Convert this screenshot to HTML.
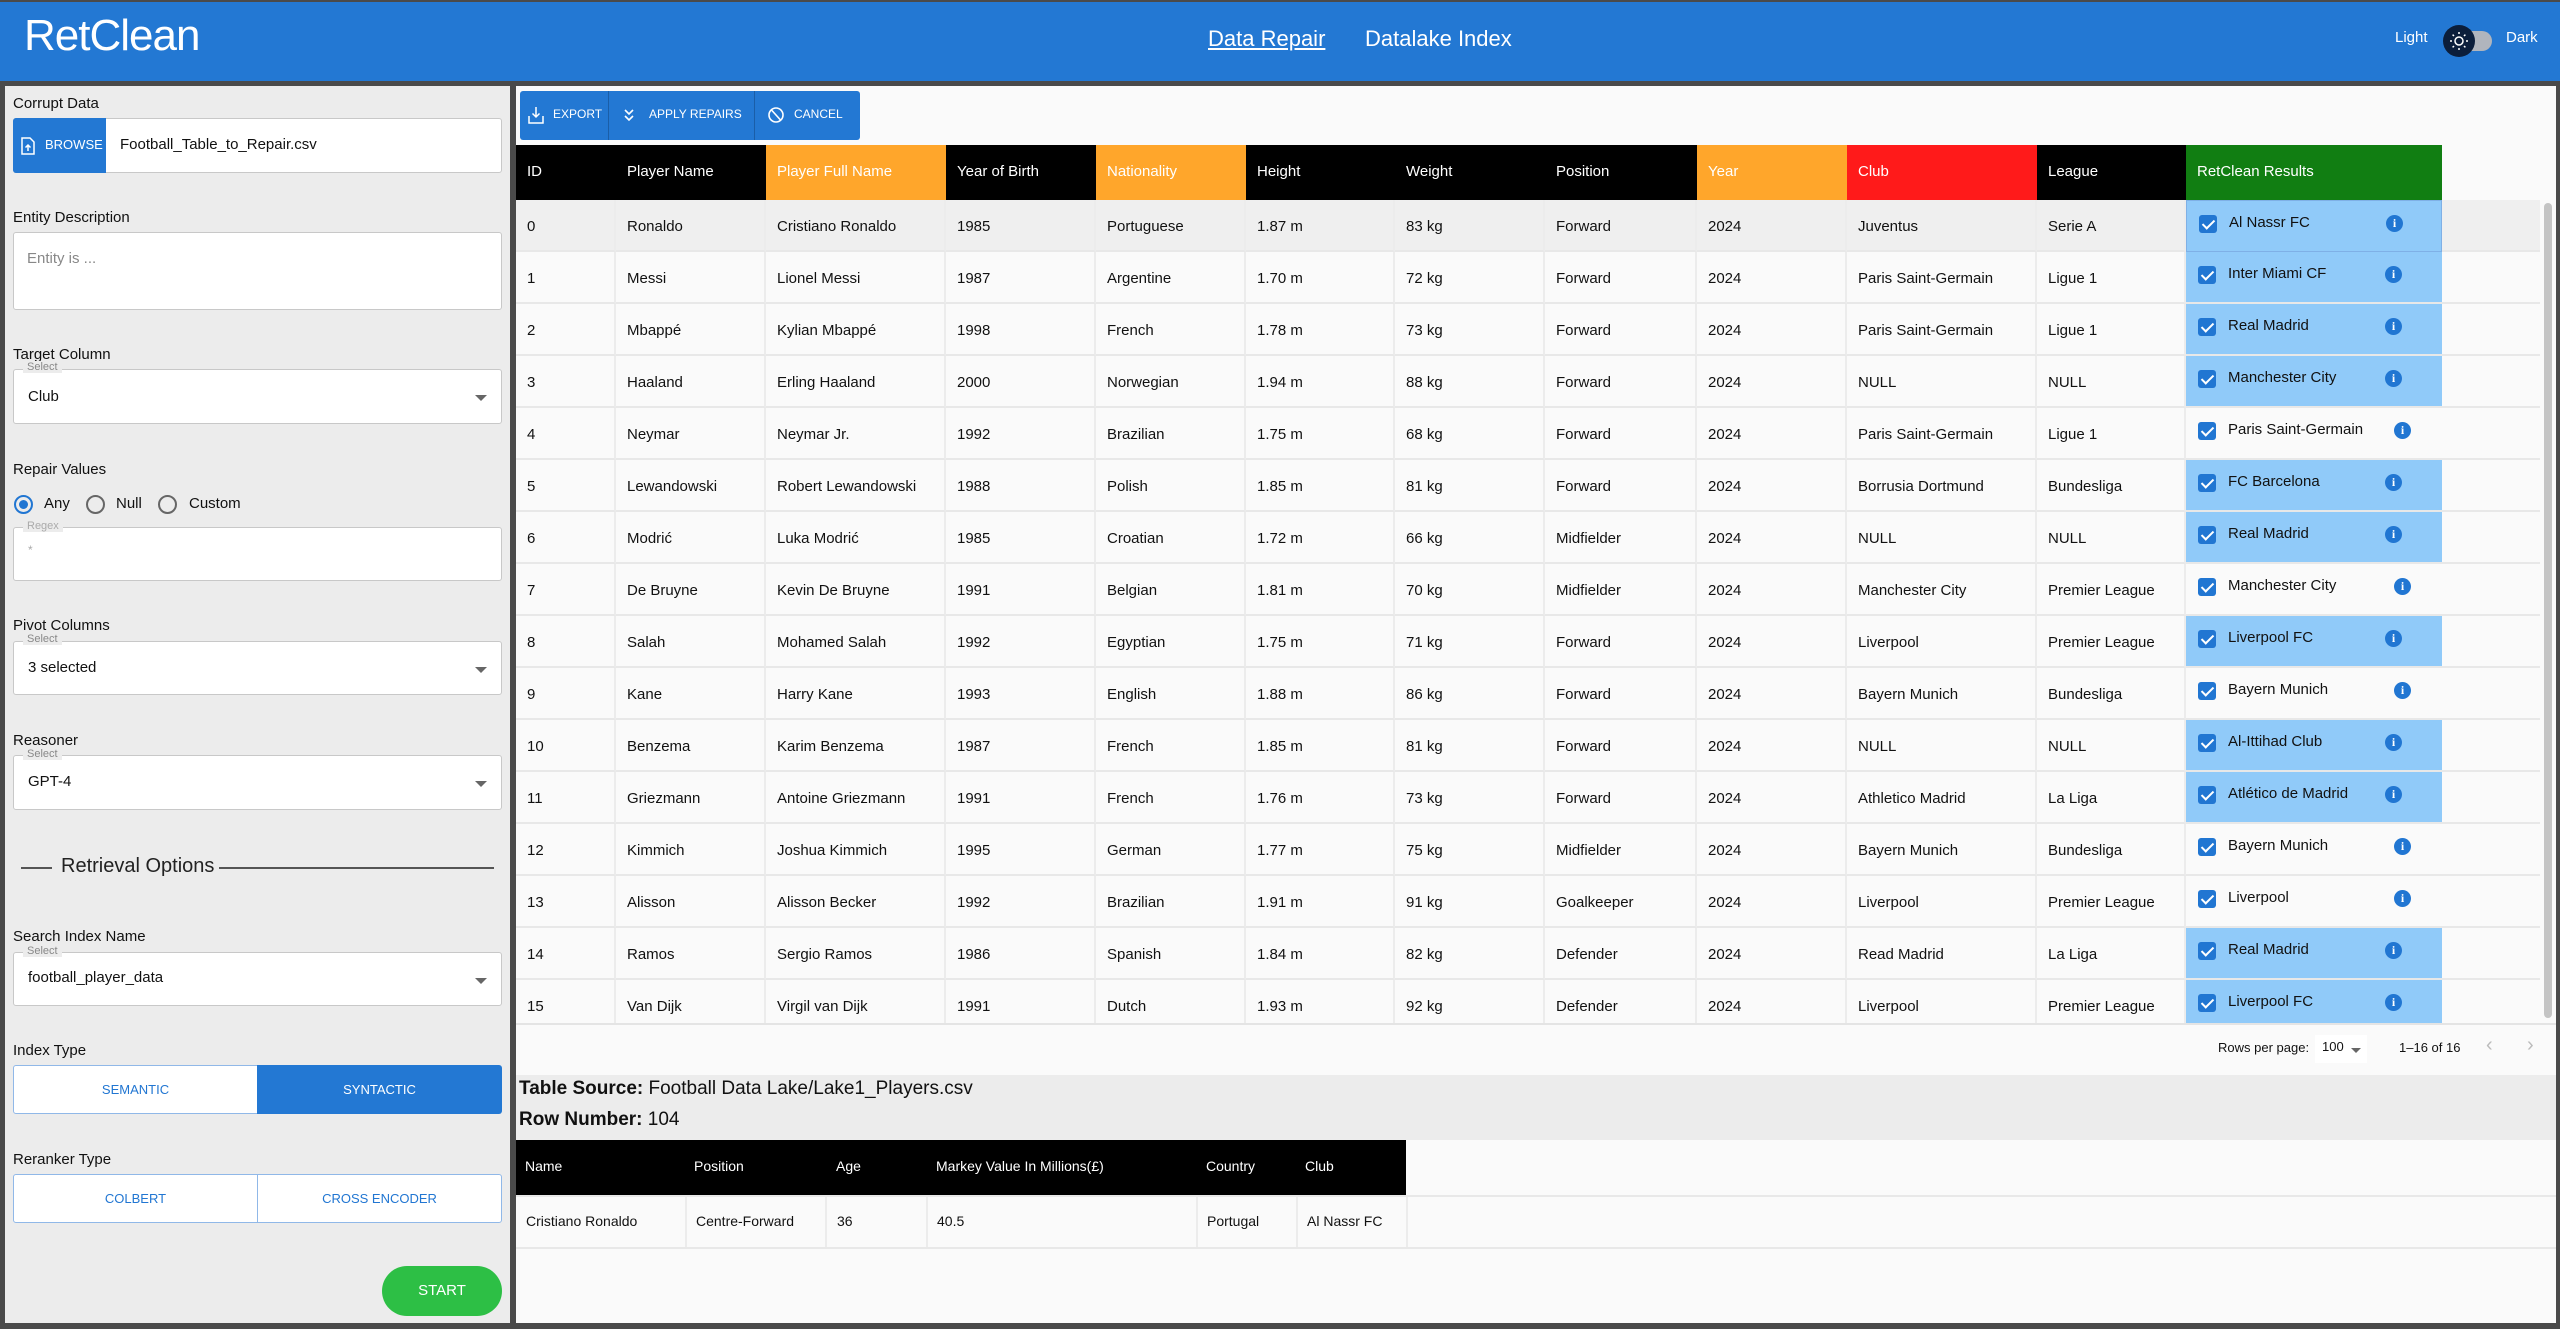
<!DOCTYPE html>
<html><head><meta charset="utf-8"><style>
*{box-sizing:border-box;margin:0;padding:0}
body{width:2560px;height:1329px;overflow:hidden;background:#4a4a4a;font-family:"Liberation Sans",sans-serif;position:relative;color:#111}
.a{position:absolute}
#hdr{left:0;top:2px;width:2560px;height:79px;background:#2378d3}
.lbl{position:absolute;left:13px;font-size:15px;color:#111}
.box{position:absolute;left:13px;width:489px;background:#fff;border:1px solid #c8c8c8;border-radius:3px}
.sel{font-size:15px;color:#111;position:absolute;left:14px}
.cap{position:absolute;left:13px;font-size:11px;color:#888;background:#ececec;padding:0 4px;line-height:12px}
.arr{position:absolute;right:14px;width:0;height:0;border-left:6px solid transparent;border-right:6px solid transparent;border-top:6px solid #666}
.row{position:absolute;left:0;height:52px;width:1926px}
.c{position:absolute;top:0;height:52px;border-right:2px solid #ececec;border-bottom:2px solid #e8e8e8;font-size:15px;line-height:54px;padding-left:11px;white-space:nowrap;overflow:hidden}
.h{position:absolute;top:145px;height:55px;font-size:15px;line-height:53px;padding-left:11px;color:#fff}
.res{position:absolute;top:0;height:52px;width:256px;border-bottom:2px solid #e8e8e8}
.cb{position:absolute;left:12px;top:14px;width:18px;height:18px;background:#2176d2;border-radius:3px}
.cb:after{content:"";position:absolute;left:6px;top:2px;width:5px;height:10px;border:solid #fff;border-width:0 2px 2px 0;transform:rotate(45deg)}
.rt{position:absolute;left:42px;top:10px;font-size:15px;line-height:24px}
.inf{position:absolute;top:14px;width:17px;height:17px;border-radius:50%;background:#2176d2;color:#fff;font-size:12px;font-weight:bold;text-align:center;line-height:17px;font-family:"Liberation Serif",serif}
</style></head><body>
<div class="a" id="hdr"></div>
<div class="a" style="left:24px;top:11px;font-size:44px;color:#fff;letter-spacing:-1px">RetClean</div>
<div class="a" style="left:1208px;top:26px;font-size:22px;color:#fff;text-decoration:underline">Data Repair</div>
<div class="a" style="left:1365px;top:26px;font-size:22px;color:#fff">Datalake Index</div>
<div class="a" style="left:2395px;top:29px;font-size:15px;color:#fff">Light</div>
<div class="a" style="left:2450px;top:31px;width:42px;height:20px;border-radius:10px;background:#b0b5bd"></div>
<div class="a" style="left:2443px;top:25px;width:32px;height:32px;border-radius:50%;background:#0b1e3b"></div>
<svg class="a" style="left:2449px;top:31px" width="20" height="20" viewBox="0 0 20 20"><circle cx="10" cy="10" r="4" fill="none" stroke="#fff" stroke-width="1.5"/><g stroke="#fff" stroke-width="1.5"><path d="M10 1v2M10 17v2M1 10h2M17 10h2M3.6 3.6l1.4 1.4M15 15l1.4 1.4M3.6 16.4L5 15M15 5l1.4-1.4"/></g></svg>
<div class="a" style="left:2506px;top:29px;font-size:15px;color:#fff">Dark</div>

<!-- left panel -->
<div class="a" style="left:5px;top:86px;width:505px;height:1237px;background:#ececec">
<div style="position:absolute;left:-5px;top:-86px;width:505px">
<div class="lbl" style="top:95px">Corrupt Data</div>
<div class="box" style="top:118px;height:55px"></div>
<div class="a" style="left:13px;top:118px;width:93px;height:55px;background:#2378d3;border-radius:3px 0 0 3px"></div>
<svg class="a" style="left:21px;top:137px" width="14" height="18" viewBox="0 0 14 18"><path d="M1 1h8l4 4v12H1z" fill="none" stroke="#fff" stroke-width="1.5"/><path d="M7 14V8M4.5 10.5L7 8l2.5 2.5" stroke="#fff" stroke-width="1.5" fill="none"/></svg>
<div class="a" style="left:45px;top:137px;font-size:13px;color:#fff">BROWSE</div>
<div class="a" style="left:120px;top:136px;font-size:15px">Football_Table_to_Repair.csv</div>
<div class="lbl" style="top:209px">Entity Description</div>
<div class="box" style="top:232px;height:78px"></div>
<div class="a" style="left:27px;top:250px;font-size:15px;color:#888">Entity is ...</div>
<div class="lbl" style="top:346px">Target Column</div>
<div class="box" style="top:369px;height:55px"><div class="sel" style="top:18px">Club</div><div class="arr" style="top:25px"></div></div>
<div class="cap" style="top:361px;left:23px">Select</div>
<div class="lbl" style="top:461px">Repair Values</div>
<div class="a" style="left:14px;top:495px;width:19px;height:19px;border-radius:50%;border:2px solid #2176d2"></div>
<div class="a" style="left:19px;top:500px;width:9px;height:9px;border-radius:50%;background:#2176d2"></div>
<div class="a" style="left:44px;top:495px;font-size:15px">Any</div>
<div class="a" style="left:86px;top:495px;width:19px;height:19px;border-radius:50%;border:2px solid #666"></div>
<div class="a" style="left:116px;top:495px;font-size:15px">Null</div>
<div class="a" style="left:158px;top:495px;width:19px;height:19px;border-radius:50%;border:2px solid #666"></div>
<div class="a" style="left:189px;top:495px;font-size:15px">Custom</div>
<div class="box" style="top:527px;height:54px"><div class="a" style="left:14px;top:15px;font-size:12px;color:#aaa">*</div></div>
<div class="cap" style="top:520px;left:23px;color:#aaa">Regex</div>
<div class="lbl" style="top:617px">Pivot Columns</div>
<div class="box" style="top:641px;height:54px"><div class="sel" style="top:17px">3 selected</div><div class="arr" style="top:25px"></div></div>
<div class="cap" style="top:633px;left:23px">Select</div>
<div class="lbl" style="top:732px">Reasoner</div>
<div class="box" style="top:755px;height:55px"><div class="sel" style="top:17px">GPT-4</div><div class="arr" style="top:25px"></div></div>
<div class="cap" style="top:748px;left:23px">Select</div>
<div class="a" style="left:21px;top:867px;width:31px;height:2px;background:#555"></div>
<div class="a" style="left:61px;top:855px;font-size:20px;color:#222">Retrieval Options</div>
<div class="a" style="left:219px;top:867px;width:275px;height:2px;background:#555"></div>
<div class="lbl" style="top:928px">Search Index Name</div>
<div class="box" style="top:952px;height:54px"><div class="sel" style="top:16px">football_player_data</div><div class="arr" style="top:25px"></div></div>
<div class="cap" style="top:945px;left:23px">Select</div>
<div class="lbl" style="top:1042px">Index Type</div>
<div class="a" style="left:13px;top:1065px;width:245px;height:49px;background:#fff;border:1px solid #90b8e8;border-radius:3px 0 0 3px;color:#2176d2;font-size:13px;text-align:center;line-height:47px">SEMANTIC</div>
<div class="a" style="left:257px;top:1065px;width:245px;height:49px;background:#2378d3;border-radius:0 3px 3px 0;color:#fff;font-size:13px;text-align:center;line-height:49px">SYNTACTIC</div>
<div class="lbl" style="top:1151px">Reranker Type</div>
<div class="a" style="left:13px;top:1174px;width:245px;height:49px;background:#fff;border:1px solid #90b8e8;border-radius:3px 0 0 3px;color:#2176d2;font-size:13px;text-align:center;line-height:47px">COLBERT</div>
<div class="a" style="left:257px;top:1174px;width:245px;height:49px;background:#fff;border:1px solid #90b8e8;border-radius:0 3px 3px 0;color:#2176d2;font-size:13px;text-align:center;line-height:47px">CROSS ENCODER</div>
<div class="a" style="left:382px;top:1266px;width:120px;height:50px;border-radius:25px;background:#2dbf45;color:#fff;font-size:15px;text-align:center;line-height:50px">START</div>
</div></div>

<!-- right panel -->
<div class="a" style="left:516px;top:86px;width:2040px;height:1237px;background:#fafafa"></div>
<div class="a" style="left:516px;top:1075px;width:2040px;height:65px;background:#ececec"></div>
<div class="a" style="left:520px;top:91px;width:340px;height:49px;background:#2378d3;border-radius:3px"></div>
<div class="a" style="left:608px;top:91px;width:1px;height:49px;background:#1a5ea8"></div>
<div class="a" style="left:754px;top:91px;width:1px;height:49px;background:#1a5ea8"></div>
<svg class="a" style="left:528px;top:106px" width="16" height="18" viewBox="0 0 16 18"><path d="M8 1v10M4.5 7.5L8 11l3.5-3.5M1 10v7h14v-7" fill="none" stroke="#fff" stroke-width="1.5"/></svg>
<div class="a" style="left:553px;top:107px;font-size:12px;color:#fff">EXPORT</div>
<svg class="a" style="left:623px;top:107px" width="12" height="16" viewBox="0 0 12 16"><path d="M2 3l4 4 4-4M2 9l4 4 4-4" fill="none" stroke="#fff" stroke-width="1.6"/></svg>
<div class="a" style="left:649px;top:107px;font-size:12px;color:#fff">APPLY REPAIRS</div>
<svg class="a" style="left:767px;top:105px" width="18" height="20" viewBox="0 0 18 20"><circle cx="9" cy="10" r="7" fill="none" stroke="#fff" stroke-width="1.6"/><path d="M4.5 5L13.5 15" stroke="#fff" stroke-width="1.6"/></svg>
<div class="a" style="left:794px;top:107px;font-size:12px;color:#fff">CANCEL</div>

<div class="h" style="left:516px;width:250px;background:#000">ID</div>
<div class="h" style="left:616px;width:150px;background:#000">Player Name</div>
<div class="h" style="left:766px;width:180px;background:#ffa62b">Player Full Name</div>
<div class="h" style="left:946px;width:150px;background:#000">Year of Birth</div>
<div class="h" style="left:1096px;width:150px;background:#ffa62b">Nationality</div>
<div class="h" style="left:1246px;width:451px;background:#000">Height</div>
<div class="h" style="left:1395px;width:150px;background:#000">Weight</div>
<div class="h" style="left:1545px;width:152px;background:#000">Position</div>
<div class="h" style="left:1697px;width:150px;background:#ffa62b">Year</div>
<div class="h" style="left:1847px;width:190px;background:#ff1a1a">Club</div>
<div class="h" style="left:2037px;width:149px;background:#000">League</div>
<div class="h" style="left:2186px;width:256px;background:#117e12">RetClean Results</div>

<div class="a" style="left:516px;top:200px;width:2024px;height:823px;overflow:hidden" id="body"></div>
<div class="a" style="left:2544px;top:203px;width:8px;height:815px;border-radius:4px;background:#c4c4c4"></div>
<div class="a" style="left:516px;top:1023px;width:2040px;height:2px;background:#e4e4e4"></div>

<div class="a" style="left:2218px;top:1040px;font-size:13px">Rows per page:</div>
<div class="a" style="left:2315px;top:1035px;width:52px;height:28px;background:#fff"></div>
<div class="a" style="left:2322px;top:1039px;font-size:13px">100</div>
<div class="a" style="left:2351px;top:1048px;border-left:5px solid transparent;border-right:5px solid transparent;border-top:5px solid #666"></div>
<div class="a" style="left:2399px;top:1040px;font-size:13px">1–16 of 16</div>
<div class="a" style="left:2486px;top:1034px;font-size:20px;color:#bbb">‹</div>
<div class="a" style="left:2527px;top:1034px;font-size:20px;color:#bbb">›</div>

<div class="a" style="left:519px;top:1078px;font-size:19px"><b>Table Source:</b> Football Data Lake/Lake1_Players.csv</div>
<div class="a" style="left:519px;top:1109px;font-size:19px"><b>Row Number:</b> 104</div>
<div class="a" style="left:516px;top:1140px;width:890px;height:55px;background:#000"></div>
<div class="a" style="left:525px;top:1158px;font-size:14px;color:#fff">Name</div>
<div class="a" style="left:694px;top:1158px;font-size:14px;color:#fff">Position</div>
<div class="a" style="left:836px;top:1158px;font-size:14px;color:#fff">Age</div>
<div class="a" style="left:936px;top:1158px;font-size:14px;color:#fff">Markey Value In Millions(£)</div>
<div class="a" style="left:1206px;top:1158px;font-size:14px;color:#fff">Country</div>
<div class="a" style="left:1305px;top:1158px;font-size:14px;color:#fff">Club</div>
<div class="a" style="left:516px;top:1195px;width:2040px;height:2px;background:#e8e8e8"></div>
<div class="a" style="left:516px;top:1247px;width:2040px;height:2px;background:#e8e8e8"></div>
<div class="a" style="left:685px;top:1197px;width:2px;height:50px;background:#ececec"></div>
<div class="a" style="left:825px;top:1197px;width:2px;height:50px;background:#ececec"></div>
<div class="a" style="left:926px;top:1197px;width:2px;height:50px;background:#ececec"></div>
<div class="a" style="left:1196px;top:1197px;width:2px;height:50px;background:#ececec"></div>
<div class="a" style="left:1296px;top:1197px;width:2px;height:50px;background:#ececec"></div>
<div class="a" style="left:1406px;top:1197px;width:2px;height:50px;background:#ececec"></div>
<div class="a" style="left:526px;top:1213px;font-size:14px">Cristiano Ronaldo</div>
<div class="a" style="left:696px;top:1213px;font-size:14px">Centre-Forward</div>
<div class="a" style="left:837px;top:1213px;font-size:14px">36</div>
<div class="a" style="left:937px;top:1213px;font-size:14px">40.5</div>
<div class="a" style="left:1207px;top:1213px;font-size:14px">Portugal</div>
<div class="a" style="left:1307px;top:1213px;font-size:14px">Al Nassr FC</div>

<script>
var D=[
["0","Ronaldo","Cristiano Ronaldo","1985","Portuguese","1.87 m","83 kg","Forward","2024","Juventus","Serie A","Al Nassr FC",1],
["1","Messi","Lionel Messi","1987","Argentine","1.70 m","72 kg","Forward","2024","Paris Saint-Germain","Ligue 1","Inter Miami CF",1],
["2","Mbappé","Kylian Mbappé","1998","French","1.78 m","73 kg","Forward","2024","Paris Saint-Germain","Ligue 1","Real Madrid",1],
["3","Haaland","Erling Haaland","2000","Norwegian","1.94 m","88 kg","Forward","2024","NULL","NULL","Manchester City",1],
["4","Neymar","Neymar Jr.","1992","Brazilian","1.75 m","68 kg","Forward","2024","Paris Saint-Germain","Ligue 1","Paris Saint-Germain",0],
["5","Lewandowski","Robert Lewandowski","1988","Polish","1.85 m","81 kg","Forward","2024","Borrusia Dortmund","Bundesliga","FC Barcelona",1],
["6","Modrić","Luka Modrić","1985","Croatian","1.72 m","66 kg","Midfielder","2024","NULL","NULL","Real Madrid",1],
["7","De Bruyne","Kevin De Bruyne","1991","Belgian","1.81 m","70 kg","Midfielder","2024","Manchester City","Premier League","Manchester City",0],
["8","Salah","Mohamed Salah","1992","Egyptian","1.75 m","71 kg","Forward","2024","Liverpool","Premier League","Liverpool FC",1],
["9","Kane","Harry Kane","1993","English","1.88 m","86 kg","Forward","2024","Bayern Munich","Bundesliga","Bayern Munich",0],
["10","Benzema","Karim Benzema","1987","French","1.85 m","81 kg","Forward","2024","NULL","NULL","Al-Ittihad Club",1],
["11","Griezmann","Antoine Griezmann","1991","French","1.76 m","73 kg","Forward","2024","Athletico Madrid","La Liga","Atlético de Madrid",1],
["12","Kimmich","Joshua Kimmich","1995","German","1.77 m","75 kg","Midfielder","2024","Bayern Munich","Bundesliga","Bayern Munich",0],
["13","Alisson","Alisson Becker","1992","Brazilian","1.91 m","91 kg","Goalkeeper","2024","Liverpool","Premier League","Liverpool",0],
["14","Ramos","Sergio Ramos","1986","Spanish","1.84 m","82 kg","Defender","2024","Read Madrid","La Liga","Real Madrid",1],
["15","Van Dijk","Virgil van Dijk","1991","Dutch","1.93 m","92 kg","Defender","2024","Liverpool","Premier League","Liverpool FC",1]];
var L=[0,100,250,430,580,730,879,1029,1181,1331,1521,1670],W=[100,150,180,150,150,149,150,152,150,190,149];
var h="";
D.forEach(function(r,i){
 var bg=i==0?"#efefef":"#fafafa";
 h+='<div class="row" style="top:'+(i*52)+'px;background:'+bg+';width:2024px">';
 for(var j=0;j<11;j++)h+='<div class="c" style="left:'+L[j]+'px;width:'+W[j]+'px">'+r[j]+'</div>';
 var rb=r[12]?"#90caf9":"#fafafa";
 var bd=i==0?"border:1px solid #7fb0e6;":"";
 h+='<div class="res" style="left:1670px;background:'+rb+';'+bd+'"><div class="cb"></div><div class="rt">'+r[11]+'</div><div class="inf" style="left:'+(r[12]?199:208)+'px">i</div></div>';
 h+='<div class="c" style="left:1926px;width:98px;border-right:0"></div></div>';
});
document.getElementById("body").innerHTML=h;
</script>
</body></html>
